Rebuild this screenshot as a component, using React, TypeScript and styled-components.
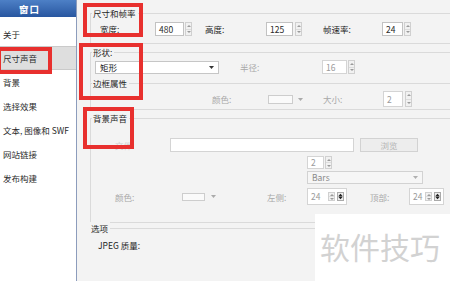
import React from 'react';
import styled, { createGlobalStyle, css } from 'styled-components';

const Global = createGlobalStyle`
  html, body { margin: 0; padding: 0; background: #fff; }
  body {
    font-family: "Noto Sans CJK SC", "Noto Sans", sans-serif;
    font-size: 8.5px;
    -webkit-font-smoothing: antialiased;
  }
`;

const Frame = styled.div`
  position: relative;
  width: 450px;
  height: 281px;
  overflow: hidden;
  display: flex;
  background: #f3f3f3;
  color: #222;
`;

const Sidebar = styled.aside`
  width: 76px;
  flex: none;
  background: #fff;
  border-right: 1px solid #8c9cbc;
  display: flex;
  flex-direction: column;
`;

const SideHeader = styled.div`
  height: 17px;
  background: linear-gradient(#4d80c6, #2856a0);
  color: #fff;
  font-weight: bold;
  font-size: 9.5px;
  display: flex;
  align-items: center;
  padding-left: 19px;
  letter-spacing: 1px;
`;

const NavList = styled.ul`
  list-style: none;
  margin: 0;
  padding: 5px 0 0;
`;

const NavItem = styled.li<{ $active?: boolean }>`
  height: 24px;
  box-sizing: border-box;
  display: flex;
  align-items: center;
  padding-left: 3px;
  white-space: nowrap;
  color: #2a2a2a;
  ${(p) =>
    p.$active &&
    css`
      background: #dedede;
      border-top: 1px solid #cacaca;
      border-bottom: 1px solid #cacaca;
    `}
`;

const Main = styled.main`
  flex: 1;
  min-width: 0;
  display: flex;
  flex-direction: column;
  padding-left: 13px;
`;

const Group = styled.section<{ $mt: number; $h: number; $noBottom?: boolean; $plain?: boolean }>`
  margin-top: ${(p) => p.$mt}px;
  margin-right: -12px;
  height: ${(p) => p.$h}px;
  flex: none;
  box-sizing: border-box;
  border-top: 1px solid #dadada;
  border-left: 1px solid ${(p) => (p.$plain ? 'transparent' : '#dadada')};
  border-bottom: 1px solid ${(p) => (p.$noBottom || p.$plain ? 'transparent' : '#dadada')};
  display: flex;
  flex-direction: column;
`;

const Legend = styled.div<{ $ml?: number }>`
  align-self: flex-start;
  margin: -7px 0 0 ${(p) => p.$ml ?? 1}px;
  padding: 0 2px 0 1px;
  height: 12px;
  line-height: 12px;
  background: #f3f3f3;
  color: #1e1e1e;
  white-space: nowrap;
`;

const Row = styled.div<{ $mt: number; $h: number }>`
  display: flex;
  align-items: center;
  margin-top: ${(p) => p.$mt}px;
  height: ${(p) => p.$h}px;
`;

const Slot = styled.div<{ $w?: number; $pl?: number; $gap?: number }>`
  flex: none;
  width: ${(p) => (p.$w ? `${p.$w}px` : 'auto')};
  padding-left: ${(p) => p.$pl ?? 0}px;
  box-sizing: border-box;
  display: flex;
  align-items: center;
  gap: ${(p) => p.$gap ?? 1}px;
`;

const Label = styled.span<{ $dim?: boolean; $faint?: boolean }>`
  white-space: nowrap;
  color: ${(p) => (p.$faint ? '#cfcfcf' : p.$dim ? '#a8a8a8' : '#1e1e1e')};
`;

const Field = styled.div<{ $w: number; $h?: number; $dim?: boolean }>`
  position: relative;
  width: ${(p) => p.$w}px;
  height: ${(p) => p.$h ?? 14}px;
  box-sizing: border-box;
  border: 1px solid ${(p) => (p.$dim ? '#d4d4d4' : '#c2c2c2')};
  background: #fff;
  color: ${(p) => (p.$dim ? '#9a9a9a' : '#2a2a2a')};
  display: flex;
  align-items: center;
  padding-left: 3px;
  line-height: 1;
`;

const Spinner = styled.div<{ $h?: number }>`
  width: 7px;
  height: ${(p) => p.$h ?? 14}px;
  box-sizing: border-box;
  border: 1px solid #d0d0d0;
  background: #f1f1f1;
  display: flex;
  flex-direction: column;
`;

const SpinHalf = styled.div`
  flex: 1;
  display: flex;
  align-items: center;
  justify-content: center;
  & + & {
    border-top: 1px solid #dcdcdc;
  }
`;

const SelectBox = styled.div<{ $w: number; $dim?: boolean }>`
  width: ${(p) => p.$w}px;
  height: 13px;
  box-sizing: border-box;
  border: 1px solid ${(p) => (p.$dim ? '#d2d2d2' : '#c6c6c6')};
  background: ${(p) => (p.$dim ? '#f6f6f6' : '#fff')};
  color: ${(p) => (p.$dim ? '#8a8a8a' : '#222')};
  display: flex;
  align-items: center;
  justify-content: space-between;
  padding: 0 4px 0 4px;
  line-height: 1;
`;

const Swatch = styled.div<{ $w: number; $h: number }>`
  width: ${(p) => p.$w}px;
  height: ${(p) => p.$h}px;
  box-sizing: border-box;
  border: 1px solid #cdcdcd;
  background: #fafafa;
`;

const Button = styled.div`
  width: 58px;
  height: 14px;
  box-sizing: border-box;
  border: 1px solid #d2d2d2;
  background: #ededed;
  color: #b4b4b4;
  display: flex;
  align-items: center;
  justify-content: center;
  line-height: 1;
`;

const InnerTools = styled.div`
  margin-left: auto;
  margin-right: 2px;
  display: flex;
  align-items: center;
  gap: 2px;
`;

const Mark = styled.div<{ $x: number; $y: number; $w: number; $h: number }>`
  position: absolute;
  left: ${(p) => p.$x}px;
  top: ${(p) => p.$y}px;
  width: ${(p) => p.$w}px;
  height: ${(p) => p.$h}px;
  box-sizing: border-box;
  border: 4px solid #e8302e;
  pointer-events: none;
`;

const Watermark = styled.div`
  position: absolute;
  right: 0;
  bottom: 0;
  width: 135px;
  height: 67px;
  background: #fff;
  color: #d2d2d2;
  font-size: 30px;
  line-height: 1;
  display: flex;
  align-items: center;
  padding: 0 0 4px 5px;
  box-sizing: border-box;
  white-space: nowrap;
`;

const Tri = ({ up, color = '#9a9a9a', w = 3 }: { up?: boolean; color?: string; w?: number }) => (
  <svg width={w + 1} height={Math.ceil((w + 1) / 2)} viewBox="0 0 4 2" preserveAspectRatio="none">
    <polygon points={up ? '0,2 4,2 2,0' : '0,0 4,0 2,2'} fill={color} />
  </svg>
);

const Arrow = ({ color }: { color: string }) => (
  <svg width="5" height="3" viewBox="0 0 5 3">
    <polygon points="0,0 5,0 2.5,3" fill={color} />
  </svg>
);

const Spin = ({ h }: { h?: number }) => (
  <Spinner $h={h}>
    <SpinHalf>
      <Tri up />
    </SpinHalf>
    <SpinHalf>
      <Tri />
    </SpinHalf>
  </Spinner>
);

const MiniStep = () => (
  <svg width="7" height="9" viewBox="0 0 7 9">
    <rect x="0.5" y="0.5" width="6" height="8" fill="#eee" stroke="#aaa" />
    <polygon points="1.5,4 5.5,4 3.5,1.8" fill="#222" />
    <polygon points="1.5,5 5.5,5 3.5,7.2" fill="#222" />
    <line x1="1.5" y1="4.5" x2="5.5" y2="4.5" stroke="#222" strokeWidth="0.6" />
  </svg>
);

const ComboSpin = ({ w, value }: { w: number; value: string }) => (
  <Field $w={w} $h={17} $dim>
    {value}
    <InnerTools>
      <Spin h={9} />
      <MiniStep />
    </InnerTools>
  </Field>
);

const navItems = ['关于', '尺寸声音', '背景', '选择效果', '文本, 图像和 SWF', '网站链接', '发布构建'];

export default function App() {
  return (
    <>
      <Global />
      <Frame>
        <Sidebar>
          <SideHeader>窗口</SideHeader>
          <NavList>
            {navItems.map((t) => (
              <NavItem key={t} $active={t === '尺寸声音'}>
                {t}
              </NavItem>
            ))}
          </NavList>
        </Sidebar>

        <Main>
          <Group $mt={13} $h={31}>
            <Legend>尺寸和帧率</Legend>
            <Row $mt={3} $h={14}>
              <Slot $w={64} $pl={9}>
                <Label>宽度:</Label>
              </Slot>
              <Slot $w={50}>
                <Field $w={29}>480</Field>
                <Spin />
              </Slot>
              <Slot $w={61}>
                <Label>高度:</Label>
              </Slot>
              <Slot $w={57} $gap={2}>
                <Field $w={27}>125</Field>
                <Spin />
              </Slot>
              <Slot $w={59}>
                <Label>帧速率:</Label>
              </Slot>
              <Slot>
                <Field $w={21}>24</Field>
                <Spin />
              </Slot>
            </Row>
          </Group>

          <Group $mt={8} $h={31} $noBottom>
            <Legend>形状:</Legend>
            <Row $mt={2} $h={14}>
              <Slot $w={149} $pl={4}>
                <SelectBox $w={124}>
                  <span>矩形</span>
                  <Arrow color="#333" />
                </SelectBox>
              </Slot>
              <Slot $w={82}>
                <Label $dim>半径:</Label>
              </Slot>
              <Slot>
                <Field $w={25} $dim>
                  16
                </Field>
                <Spin />
              </Slot>
            </Row>
          </Group>

          <Group $mt={0} $h={27}>
            <Legend>边框属性</Legend>
            <Row $mt={2} $h={16}>
              <Slot $w={177} $pl={121}>
                <Label $dim>颜色:</Label>
              </Slot>
              <Slot $w={55} $gap={5}>
                <Swatch $w={25} $h={9} />
                <Arrow color="#aaa" />
              </Slot>
              <Slot $w={60}>
                <Label $dim>大小:</Label>
              </Slot>
              <Slot $gap={2}>
                <Field $w={20} $h={16} $dim>
                  2
                </Field>
                <Spin h={16} />
              </Slot>
            </Row>
          </Group>

          <Group $mt={8} $h={105}>
            <Legend>背景声音</Legend>
            <Row $mt={14} $h={14}>
              <Slot $w={79} $pl={24}>
                <Label $faint>文件:</Label>
              </Slot>
              <Slot $gap={6}>
                <Field $w={184} $dim />
                <Button>浏览</Button>
              </Slot>
            </Row>
            <Row $mt={4} $h={13}>
              <Slot $pl={216} $gap={1}>
                <Field $w={17} $h={13} $dim>
                  2
                </Field>
                <Spin h={13} />
              </Slot>
            </Row>
            <Row $mt={2} $h={13}>
              <Slot $pl={216}>
                <SelectBox $w={116} $dim>
                  <span>Bars</span>
                  <Arrow color="#b0b0b0" />
                </SelectBox>
              </Slot>
            </Row>
            <Row $mt={4} $h={17}>
              <Slot $w={91} $pl={24}>
                <Label $dim>颜色:</Label>
              </Slot>
              <Slot $w={85} $gap={6}>
                <Swatch $w={23} $h={8} />
                <Arrow color="#aaa" />
              </Slot>
              <Slot $w={40}>
                <Label $dim>左侧:</Label>
              </Slot>
              <Slot $w={63}>
                <ComboSpin w={40} value="24" />
              </Slot>
              <Slot $w={39}>
                <Label $dim>顶部:</Label>
              </Slot>
              <Slot>
                <ComboSpin w={35} value="24" />
              </Slot>
            </Row>
          </Group>

          <Group $mt={5} $h={60} $plain>
            <Legend $ml={-1}>选项</Legend>
            <Row $mt={5} $h={12}>
              <Slot $pl={7}>
                <Label>JPEG 质量:</Label>
              </Slot>
            </Row>
          </Group>
        </Main>

        <Mark $x={83} $y={3} $w={60} $h={34} />
        <Mark $x={79} $y={43} $w={64} $h={57} />
        <Mark $x={83} $y={107} $w={51} $h={42} />
        <Mark $x={-3} $y={47} $w={55} $h={27} />

        <Watermark>软件技巧</Watermark>
      </Frame>
    </>
  );
}
